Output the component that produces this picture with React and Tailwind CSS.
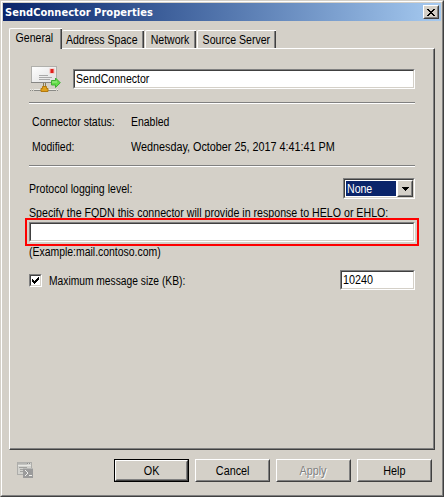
import React from "react";

const sunken =
  "border border-t-[#808080] border-l-[#808080] border-r-white border-b-white";
const sunkenInner =
  "border border-t-[#404040] border-l-[#404040] border-r-[#d4d0c8] border-b-[#d4d0c8]";
const raised =
  "border border-t-white border-l-white border-r-[#404040] border-b-[#404040]";
const raisedInner =
  "border border-t-[#d4d0c8] border-l-[#d4d0c8] border-r-[#808080] border-b-[#808080]";

// Dialog text, condensed horizontally to the narrow system face.
function Label({ center, scale = "scale-x-[0.88]", className = "", children }) {
  return (
    <span className={`inline-block w-max ${center ? "origin-center" : "origin-left"} ${scale} ${className}`}>
      {children}
    </span>
  );
}

function Field({ className = "", children }) {
  return (
    <div className={`${sunken} h-[20px] shrink-0 ${className}`}>
      <div className={`${sunkenInner} flex h-full items-center bg-white pl-px`}>{children}</div>
    </div>
  );
}

function Rule() {
  return <div className="h-[2px] w-[386px] border-t border-b border-t-[#808080] border-b-white" />;
}

function Tab({ active, className = "", children }) {
  return (
    <div
      className={`shrink-0 rounded-tl-[2px] border-t border-white bg-[#d4d0c8] ${
        active ? "relative z-10 h-[21px]" : "h-[18px]"
      } ${className}`}
    >
      <div className="h-full border-r border-r-[#404040]">
        <div
          className={`flex h-full w-full items-center justify-center border-r border-r-[#808080] ${
            active ? "pr-[2px] pb-[2px]" : "pt-px"
          }`}
        >
          <Label center>{children}</Label>
        </div>
      </div>
    </div>
  );
}

function Button({ primary, disabled, children }) {
  return (
    <div className={`h-[23px] w-[75px] ${primary ? "border border-black" : ""}`}>
      <div className={`${raised} h-full`}>
        <div
          className={`${raisedInner} flex h-full items-center justify-center ${
            disabled ? "text-[#808080] [text-shadow:1px_1px_0_white]" : ""
          }`}
        >
          <Label center scale="scale-x-[0.9]">{children}</Label>
        </div>
      </div>
    </div>
  );
}

function MailIcon() {
  return (
    <svg width="32" height="29" viewBox="0 0 32 29" className="shrink-0">
      <defs>
        <linearGradient id="paper" x1="0" y1="0" x2="1" y2="1">
          <stop offset="0" stopColor="#ffffff" />
          <stop offset="1" stopColor="#dedede" />
        </linearGradient>
      </defs>
      <rect x="2.5" y="1.5" width="25" height="16" fill="url(#paper)" stroke="#b0b0ac" />
      <path d="M2 17.5h26" stroke="#868684" />
      <rect x="20.500" y="3.500" width="5" height="5" fill="#f3b5b0" />
      <rect x="21.500" y="4" width="3" height="4" fill="#e0201c" />
      <path d="M10 10.5h9M10 12.5h13M10 14.5h11" stroke="#a9a9a9" />
      <path d="M14.500 18v4M16.500 18v4" stroke="#8b7b52" />
      <path d="M5 25.500h22M1 25.500h1M3 25.500h1M28 25.500h1" stroke="#8a8a86" />
      <path d="M5 24.500h22M1 24.500h1M3 24.500h1M28 24.500h1" stroke="#ecece8" />
      <path d="M13.500 21.500h4v2h1.500v3h-7v-3h1.500z" fill="#dfa01c" stroke="#b3790d" />
      <path d="M22.500 15.500h4v-2.500l4.800 4.800-4.800 4.700v-2.500h-4z" fill="#62dc48" stroke="#3fae35" />
      <path d="M23 17h5" stroke="#a5f090" />
    </svg>
  );
}

function ShellIcon() {
  return (
    <svg width="17" height="17" viewBox="0 0 17 17" className="shrink-0">
      <rect x="0.500" y="0.500" width="14" height="12" fill="#d2d2ce" stroke="#adadaa" />
      <path d="M1 1.500h9" stroke="#b5b5b2" strokeWidth="2" />
      <path d="M10 1.500h4" stroke="#8c8c8c" strokeDasharray="1 1" />
      <path d="M1 3.500h13" stroke="#e8e8e4" />
      <path d="M2 5.500h8M3 7.500h5M3 9.500h3" stroke="#a2a29f" />
      <rect x="6" y="6" width="10" height="10" fill="#9b9b9b" />
      <path d="M6 6.500h10" stroke="#b9b9b7" />
      <path d="M8 8l3 3-3 3M12 13.500h3" fill="none" stroke="#f0f0ed" />
    </svg>
  );
}

export default function App() {
  return (
    <div className="h-[497px] w-[444px] cursor-default overflow-hidden border border-t-[#d4d0c8] border-l-[#d4d0c8] border-r-[#404040] border-b-[#404040] bg-[#d4d0c8] font-['Liberation_Sans',Arial,sans-serif] text-[12px] leading-[14px] whitespace-nowrap text-black">
      <div className="h-full border border-t-white border-l-white border-r-[#808080] border-b-[#808080] p-px">
        <div className="flex h-[18px] items-center justify-between bg-linear-to-r from-[#0a246a] to-[#a6caf0] pr-[2px] pl-[2px]">
          <span className="pt-px font-['DejaVu_Sans_Condensed','DejaVu_Sans',sans-serif] text-[11px] font-bold tracking-[0.04px] text-white">
            SendConnector Properties
          </span>
          <div className={`${raised} h-[14px] w-[16px]`}>
            <div className={`${raisedInner} flex h-full items-center justify-center bg-[#d4d0c8]`}>
              <svg width="8" height="7" viewBox="0 0 8 7" shapeRendering="crispEdges">
                <path d="M0 0h2v1h1v1h2V1h1V0h2v1H7v1H6v1H5v1h1v1h1v1h1v1H6V6H5V5H3v1H2v1H0V6h1V5h1V4h1V3H2V2H1V1H0z" />
              </svg>
            </div>
          </div>
        </div>

        <div className="flex h-[27px] items-end pt-[7px] pl-[6px]">
          <Tab active className="-mb-px w-[53px] border-l">General</Tab>
          <Tab className="w-[82px]">Address Space</Tab>
          <Tab className="ml-px w-[51px] border-l">Network</Tab>
          <Tab className="ml-px w-[79px] border-l">Source Server</Tab>
        </div>

        <div className={`${raised} ml-[6px] h-[402px] w-[426px]`}>
          <div className="h-full border-r border-b border-[#808080] pl-[19px]">
            <div className="flex h-[53px] pt-[16px]">
              <MailIcon />
              <Field className="mt-[4px] ml-[12px] w-[342px]">
                <Label>SendConnector</Label>
              </Field>
            </div>
            <Rule />
            <div className="grid h-[61px] grid-cols-[99px_1fr] content-start gap-y-[11px] pt-[11px] pl-[3px]">
              <Label>Connector status:</Label>
              <Label scale="scale-x-[0.87]">Enabled</Label>
              <Label scale="scale-x-[0.87]">Modified:</Label>
              <Label scale="scale-x-[0.9]">Wednesday, October 25, 2017 4:41:41 PM</Label>
            </div>
            <Rule />
            <div className="mt-[11px] flex h-[21px] w-[386px] items-center justify-between">
              <Label>Protocol logging level:</Label>
              <div className={`${sunken} h-[21px] w-[72px]`}>
                <div className={`${sunkenInner} flex h-full bg-white`}>
                  <div className="m-px flex flex-1 items-center bg-[#0a246a] pt-px pl-px text-white">
                    <Label>None</Label>
                  </div>
                  <div className={`${raised} w-[16px]`}>
                    <div className={`${raisedInner} flex h-full items-center justify-center bg-[#d4d0c8]`}>
                      <svg width="7" height="4" viewBox="0 0 7 4" shapeRendering="crispEdges">
                        <path d="M0 0h7v1H6v1H5v1H4v1H3V3H2V2H1V1H0z" />
                      </svg>
                    </div>
                  </div>
                </div>
              </div>
            </div>
            <div className="mt-[7px]">
              <Label scale="scale-x-[0.886]">
                Specify the FQDN this connector will provide in response to HELO or EHLO:
              </Label>
            </div>
            <div className="relative -mt-[2px] -ml-[4px] h-[28px] w-[394px] border-2 border-[#fe0000] p-[2px]">
              <Field className="w-[386px]" />
            </div>
            <div className="-mt-px">
              <Label scale="scale-x-[0.87]">(Example:mail.contoso.com)</Label>
            </div>
            <div className="mt-[11px] flex w-[386px] items-start">
              <div className={`${sunken} mt-[4px] h-[13px] w-[13px]`}>
                <div className={`${sunkenInner} h-full bg-white`}>
                  <svg width="9" height="9" viewBox="0 0 9 9" shapeRendering="crispEdges">
                    <path d="M1 3h1v1h1v1h1V4h1V3h1V2h1V1h1v3H7v1H6v1H5v1H4v1H3V7H2V6H1z" />
                  </svg>
                </div>
              </div>
              <Label scale="scale-x-[0.855]" className="mt-[4px] ml-[7px]">Maximum message size (KB):</Label>
              <Field className="ml-auto w-[75px]">
                <Label scale="scale-x-[0.9]">10240</Label>
              </Field>
            </div>
          </div>
        </div>

        <div className="mt-[9px] flex h-[23px] items-center pl-[14px]">
          <ShellIcon />
          <div className="ml-[80px] flex gap-[6px]">
            <Button primary>OK</Button>
            <Button>Cancel</Button>
            <Button disabled>Apply</Button>
            <Button>Help</Button>
          </div>
        </div>
      </div>
    </div>
  );
}
